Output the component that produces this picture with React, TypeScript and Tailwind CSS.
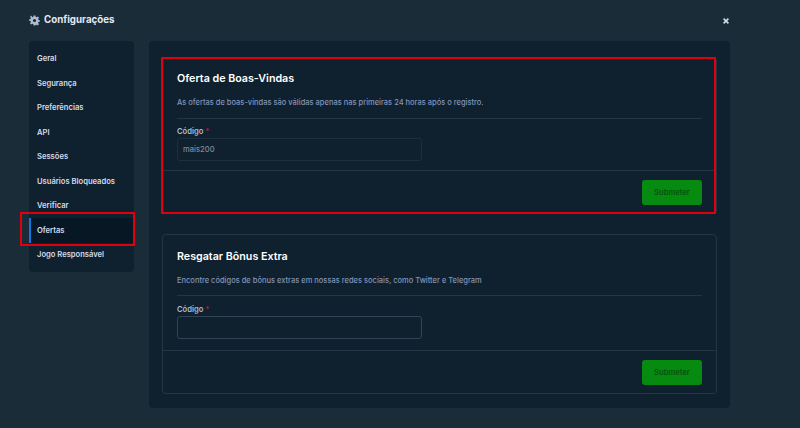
const menu = ['Geral', 'Segurança', 'Preferências', 'API', 'Sessões', 'Usuários Bloqueados', 'Verificar', 'Ofertas', 'Jogo Responsável']

function Gear() {
  return (
    <svg width="11" height="11" viewBox="0 0 24 24" fill="#b1bad3" fillRule="evenodd" className="shrink-0">
      <path d="M10 1h4l.7 3.2 1.900.8 2.800-1.800 2.400 2.900-2 2.500.6 1.900 3.100 1v3l-3.100 1-.6 1.900 2 2.500-2.400 2.900-2.800-1.800-1.900.8L14 23h-4l-.7-3.200-1.900-.8-2.800 1.800-2.400-2.900 2-2.500-.6-1.900-3.100-1v-3l3.100-1 .6-1.900-2-2.500 2.400-2.900L7.400 5l1.900-.8zM12 8.500a3.500 3.500 0 1 0 0 7 3.500 3.500 0 0 0 0-7z" />
    </svg>
  )
}

function OfferCard({
  title,
  text,
  value,
  filled,
  highlighted,
}: {
  title: string
  text: string
  value?: string
  filled?: boolean
  highlighted?: boolean
}) {
  return (
    <div className="relative rounded-[4px] border border-[#213743] bg-[#0f212e]">
      <div className={`px-[14px] ${filled ? 'pt-[14px]' : 'pt-[15px]'}`}>
        <h2 className="text-[10.7px] leading-[14px] font-semibold text-white">{title}</h2>
        <p className="mt-[12px] text-[7.5px] leading-[10px] font-medium text-[#8494b8]">{text}</p>
        <div className={`border-t border-[#213743] ${filled ? 'mt-[10px] pt-[7px]' : 'mt-[9px] pt-[8px]'}`}>
          <label className="block text-[7.6px] leading-[11px] font-semibold text-[#b1bad3]">
            Código <span className="text-[#a3203f]">*</span>
          </label>
          <div
            className={`mt-[1px] h-[23px] w-[245px] rounded-[3px] border px-[5px] text-[7.6px] leading-[21px] font-medium text-[#7f8a9b] ${
              filled ? 'border-[#1c2f3c]' : 'border-[#2f4553]'
            }`}
          >
            {value}
          </div>
        </div>
      </div>
      <div className={`flex justify-end border-t border-[#213743] px-[14px] pt-[9px] pb-[8px] ${filled ? 'mt-[9px]' : 'mt-[11px]'}`}>
        <button className="h-[25px] w-[60px] rounded-[3px] bg-[#078a10] text-[7.6px] font-semibold text-[#05550f]">
          Submeter
        </button>
      </div>
      {highlighted && <div className="absolute -top-px right-0 -bottom-px -left-[2px] rounded-[1px] border-2 border-[#e2000f]" />}
    </div>
  )
}

export default function App() {
  return (
    <div className="h-screen overflow-hidden bg-[#1a2c38] px-[29px] font-['Inter',sans-serif]">
      <header className="flex h-[41px] w-[700px] items-center justify-between">
        <div className="flex items-center gap-[4px]">
          <Gear />
          <span className="text-[9.75px] font-bold text-[#e4e8f0]">Configurações</span>
        </div>
        <svg width="6" height="6" viewBox="0 0 10 10" stroke="#d5dceb" strokeWidth="2.600">
          <path d="M1 1l8 8M9 1l-8 8" />
        </svg>
      </header>

      <div className="flex items-start gap-[15px]">
        <nav className="w-[105px] rounded-[4px] bg-[#0f212e] pt-[5.5px] pb-[4.5px]">
          {menu.map((item) => (
            <div
              key={item}
              className={`relative flex h-[24.5px] items-center text-[7.6px] font-semibold text-[#d5dceb] ${
                item === 'Ofertas' ? 'border-l-2 border-[#1475e1] bg-[#071824] pl-[6px]' : 'pl-[8px]'
              }`}
            >
              {item}
              {item === 'Ofertas' && (
                <div className="absolute -top-[6px] -right-px -bottom-[3px] -left-[11px] border-2 border-[#e2000f]" />
              )}
            </div>
          ))}
        </nav>

        <main className="flex w-[581px] flex-col gap-[20px] rounded-[4px] bg-[#0f212e] px-[13px] pt-[16px] pb-[14px]">
          <OfferCard
            title="Oferta de Boas-Vindas"
            text="As ofertas de boas-vindas são válidas apenas nas primeiras 24 horas após o registro."
            value="mais200"
            filled
            highlighted
          />
          <OfferCard
            title="Resgatar Bônus Extra"
            text="Encontre códigos de bônus extras em nossas redes sociais, como Twitter e Telegram"
          />
        </main>
      </div>
    </div>
  )
}
